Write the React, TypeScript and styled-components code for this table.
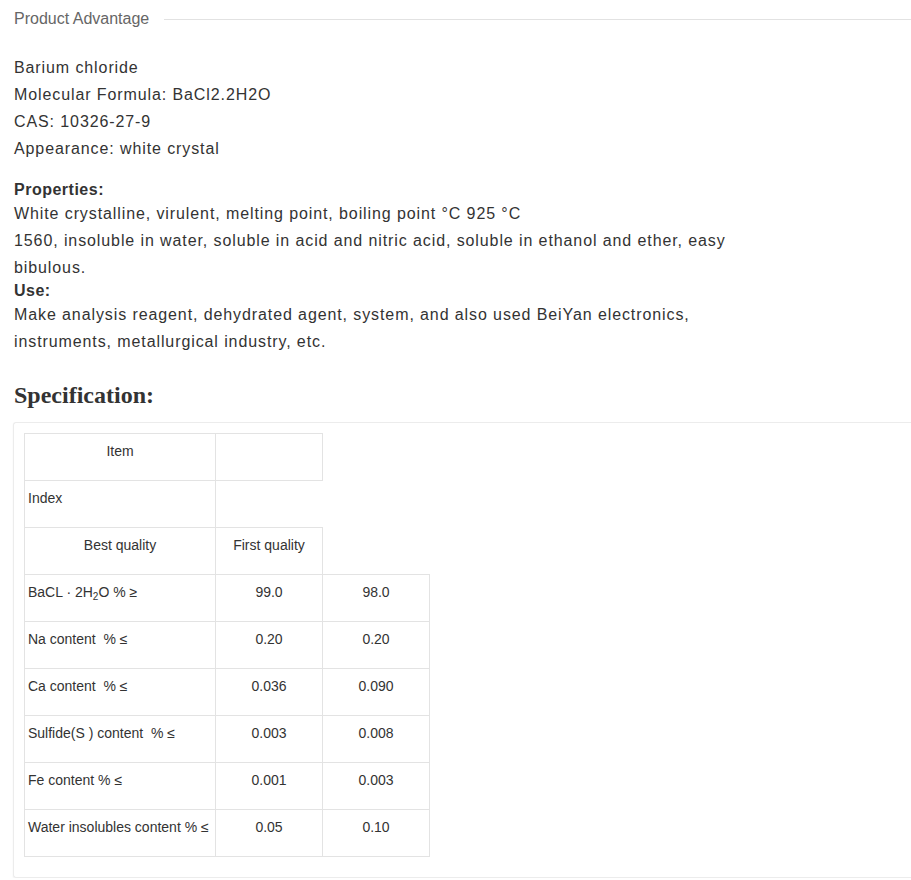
import React from "react";
import styled, { createGlobalStyle } from "styled-components";

const GlobalStyle = createGlobalStyle`
    html, body {
        margin: 0;
        padding: 0;
        background: #fff;
        overflow-x: hidden;
    }
    body {
        font-family: "Liberation Sans", Arial, sans-serif;
        color: #333;
    }
`;

type Row = {
    name: React.ReactNode;
    best: string;
    first: string;
};

const rows: Row[] = [
    {
        name: (
            <>
                BaCL · 2H<sub>2</sub>O % ≥
            </>
        ),
        best: "99.0",
        first: "98.0",
    },
    { name: "Na content  % ≤", best: "0.20", first: "0.20" },
    { name: "Ca content  % ≤", best: "0.036", first: "0.090" },
    { name: "Sulfide(S ) content  % ≤", best: "0.003", first: "0.008" },
    { name: "Fe content % ≤", best: "0.001", first: "0.003" },
    { name: "Water insolubles content % ≤", best: "0.05", first: "0.10" },
];

export default function App() {
    return (
        <>
            <GlobalStyle />
            <StyledPage>
                <div className="advantage__title">
                    <span>Product Advantage</span>
                    <i />
                </div>

                <div className="advantage__intro">
                    <p>Barium chloride</p>
                    <p>Molecular Formula: BaCl2.2H2O</p>
                    <p>CAS: 10326-27-9</p>
                    <p>Appearance: white crystal</p>
                </div>

                <div className="advantage__text">
                    <h4>Properties:</h4>
                    <p>White crystalline, virulent, melting point, boiling point °C 925 °C</p>
                    <p>
                        1560, insoluble in water, soluble in acid and nitric acid, soluble in
                        ethanol and ether, easy
                    </p>
                    <p>bibulous.</p>
                    <h4>Use:</h4>
                    <p>
                        Make analysis reagent, dehydrated agent, system, and also used BeiYan
                        electronics,
                    </p>
                    <p>instruments, metallurgical industry, etc.</p>
                </div>

                <h2 className="advantage__spec">Specification:</h2>

                <SpecBox>
                    <SpecTable>
                        <colgroup>
                            <col style={{ width: 191 }} />
                            <col style={{ width: 107 }} />
                            <col style={{ width: 107 }} />
                        </colgroup>
                        <tbody>
                            <tr>
                                <Cell $center>Item</Cell>
                                <Cell />
                            </tr>
                            <tr>
                                <Cell>Index</Cell>
                            </tr>
                            <tr>
                                <Cell $center>Best quality</Cell>
                                <Cell $center>First quality</Cell>
                            </tr>
                            {rows.map((r, i) => (
                                <tr key={i}>
                                    <Cell>{r.name}</Cell>
                                    <Cell $center>{r.best}</Cell>
                                    <Cell $center>{r.first}</Cell>
                                </tr>
                            ))}
                        </tbody>
                    </SpecTable>
                </SpecBox>
            </StyledPage>
        </>
    );
}

const StyledPage = styled.div`
    padding: 9px 0 0 14px;

    .advantage {
        &__title {
            display: flex;
            align-items: center;
            height: 20px;
            span {
                font-size: 16px;
                color: #666;
                white-space: nowrap;
            }
            i {
                flex: 1;
                height: 1px;
                background: #e2e2e2;
                margin-left: 15px;
                margin-top: 1px;
            }
        }
        &__intro {
            margin-top: 25px;
            p {
                margin: 0;
                font-size: 16px;
                line-height: 27px;
                letter-spacing: 0.9px;
            }
        }
        &__text {
            margin-top: 18px;
            h4 {
                margin: 0;
                font-size: 16px;
                font-weight: bold;
                line-height: 20px;
                letter-spacing: 0.5px;
            }
            p {
                margin: 0;
                font-size: 16px;
                line-height: 27px;
                letter-spacing: 0.9px;
            }
        }
        &__spec {
            margin: 27px 0 0;
            font-family: "Liberation Serif", "Times New Roman", serif;
            font-size: 24px;
            font-weight: bold;
            line-height: 26px;
            color: #333;
        }
    }
`;

const SpecBox = styled.div`
    margin: 14px 0 0 -1px;
    padding: 10px 0 20px 10px;
    border: 1px solid #ececec;
    border-right: none;
    border-radius: 3px 0 0 3px;
    box-shadow: 0 1px 2px rgba(0, 0, 0, 0.06);
`;

const SpecTable = styled.table`
    border-collapse: collapse;
    table-layout: fixed;
    width: 405px;
    font-size: 14px;
    color: #333;
`;

const Cell = styled.td<{ $center?: boolean }>`
    border: 1px solid #e3e3e3;
    padding: 7px 3px 19px;
    line-height: 20px;
    vertical-align: top;
    text-align: ${(p) => (p.$center ? "center" : "left")};
    white-space: pre;
    overflow: hidden;

    sub {
        font-size: 10px;
        line-height: 0;
        vertical-align: -3px;
    }
`;
